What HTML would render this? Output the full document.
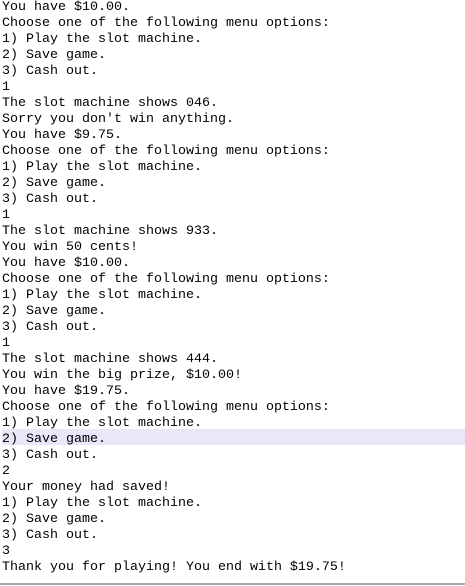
<!DOCTYPE html>
<html><head><style>
html,body{margin:0;padding:0;background:#fff;width:465px;height:586px;overflow:hidden;position:relative}
pre{position:absolute;left:2px;top:0px;margin:0;font-family:"Liberation Mono","Courier New",monospace;font-size:13.33px;line-height:16px;color:#000;z-index:2}
.hl{position:absolute;left:2px;right:0;top:429px;height:16px;background:#e8e8fa;z-index:1}
.bb{position:absolute;left:0;right:0;top:583px;height:2px;background:#a8a8a8}
</style></head><body>
<div class="hl"></div>
<pre>You have $10.00.
Choose one of the following menu options:
1) Play the slot machine.
2) Save game.
3) Cash out.
1
The slot machine shows 046.
Sorry you don't win anything.
You have $9.75.
Choose one of the following menu options:
1) Play the slot machine.
2) Save game.
3) Cash out.
1
The slot machine shows 933.
You win 50 cents!
You have $10.00.
Choose one of the following menu options:
1) Play the slot machine.
2) Save game.
3) Cash out.
1
The slot machine shows 444.
You win the big prize, $10.00!
You have $19.75.
Choose one of the following menu options:
1) Play the slot machine.
2) Save game.
3) Cash out.
2
Your money had saved!
1) Play the slot machine.
2) Save game.
3) Cash out.
3
Thank you for playing! You end with $19.75!</pre>
<div class="bb"></div>
</body></html>
